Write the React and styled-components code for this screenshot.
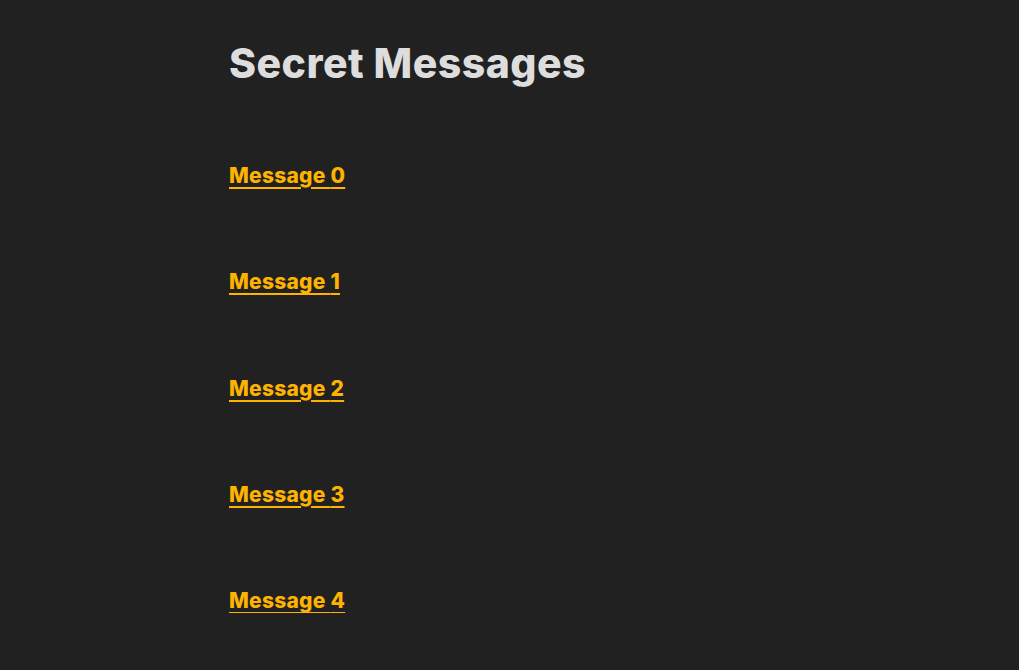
import styled, { createGlobalStyle } from 'styled-components'

const GlobalStyle = createGlobalStyle`
    html, body {
        margin: 0;
        padding: 0;
        background: #212121;
    }
    body {
        font-family: Inter, "Noto Sans", sans-serif;
    }
`

const Page = styled.main`
    width: 561px;
    margin: 0 auto;
    padding-top: 38px;
`
const Title = styled.h1`
    margin: 0;
    color: #dddddd;
    font-size: 41px;
    font-weight: 800;
    line-height: 50px;
    letter-spacing: 0.45px;
`
const List = styled.div`
    display: flex;
    flex-direction: column;
    gap: 82.3px;
    margin-top: 76px;
`
const Link = styled.a`
    color: #fdb300;
    font-size: 21px;
    font-weight: 800;
    line-height: 24px;
    letter-spacing: 0.25px;
    text-decoration: underline;
    text-underline-offset: 4px;
    text-decoration-thickness: 2px;
    width: fit-content;
`

const messages = [0, 1, 2, 3, 4]

const App = () => {
    return (
        <Page>
            <GlobalStyle />
            <Title>Secret Messages</Title>
            <List>
                {messages.map((n) => (
                    <Link key={n} href={`#message-${n}`}>Message {n}</Link>
                ))}
            </List>
        </Page>
    )
}

export default App
